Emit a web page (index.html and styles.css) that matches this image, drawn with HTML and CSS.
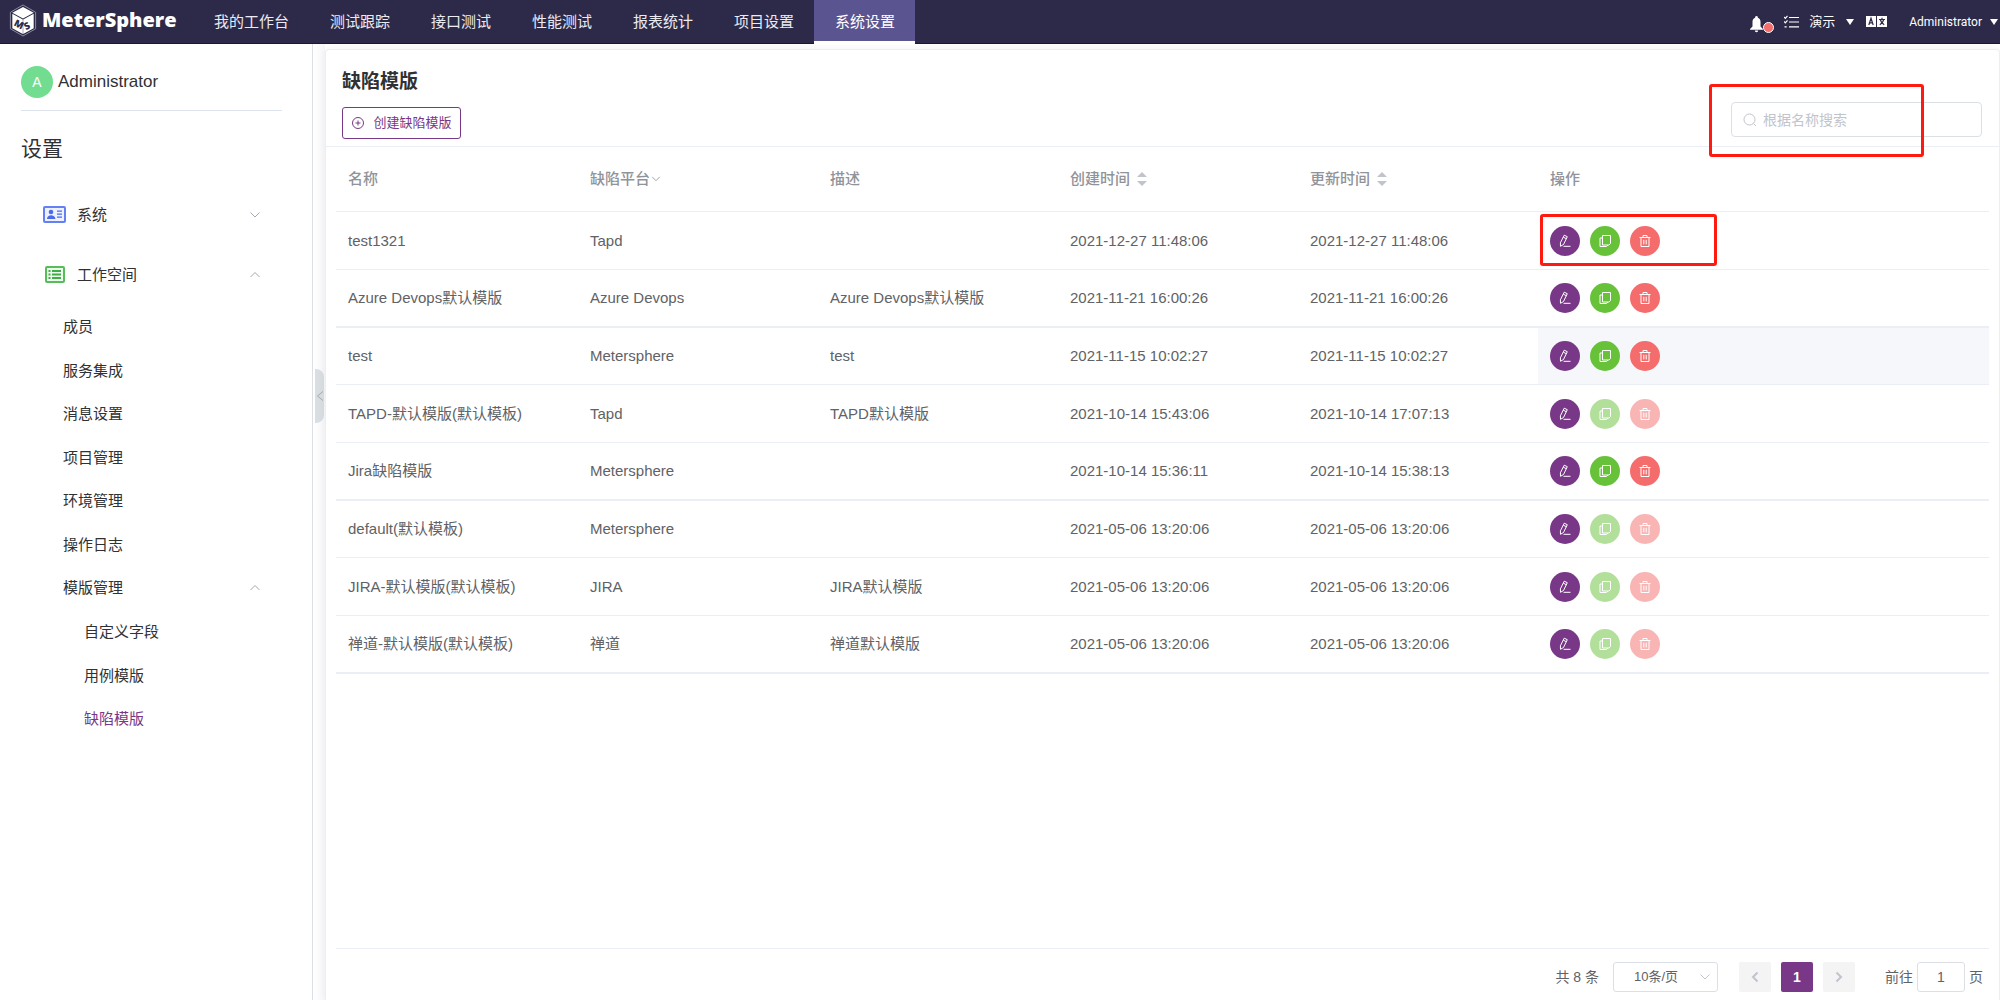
FILE: index.html
```html
<!DOCTYPE html>
<html lang="zh-CN">
<head>
<meta charset="utf-8">
<meta name="viewport" content="width=device-width, initial-scale=1">
<title>MeterSphere</title>
<link rel="stylesheet" href="styles.css">
</head>
<body>
<svg class="sprite" aria-hidden="true">
  <symbol id="edit" viewBox="0 0 14 14"><path d="M6.200 1.200 9.300 2.700 5.500 10.500 2.500 12.300 2.400 8.800ZM5.300 3.200 8.300 4.700M5.500 12.300h7"/></symbol>
  <symbol id="copy" viewBox="0 0 14 14"><path d="M4.500 1.500h8v8l-1.500 1.500h-6.500zM4.500 4H2v8.500h6.500l1.500-1.500"/></symbol>
  <symbol id="trash" viewBox="0 0 14 14"><path d="M1.500 3.500h11M5 3.500v-2h4v2M3 3.500v9h8v-9M5.800 5.800v4.600M8.200 5.800v4.600"/></symbol>
  <symbol id="down" viewBox="0 0 12 12"><path d="M1.500 3.500 6 8l4.500-4.500"/></symbol>
  <symbol id="up" viewBox="0 0 12 12"><path d="M1.500 8 6 3.500 10.500 8"/></symbol>
</svg>

<header class="topbar">
  <a class="brand" href="#">
    <svg class="brand-mark" viewBox="0 0 28 34" aria-hidden="true">
      <path d="M14 1 27 8.500v17L14 33 1 25.500v-17Z" fill="none" stroke="#8e8ba3"/>
      <path d="M14 3 25 9 14 15 3 9ZM3 10 13.800 16v15L3 25ZM25 10 14.200 16v15L25 25Z" fill="#fff"/>
      <text class="mark-letter" x="4" y="22" transform="rotate(27 4 22)">M</text>
      <text class="mark-letter" x="17" y="27" transform="rotate(-27 17 27)">S</text>
    </svg>
    <span class="brand-name">MeterSphere</span>
  </a>
  <nav class="topnav">
    <a href="#">我的工作台</a><a href="#">测试跟踪</a><a href="#">接口测试</a><a href="#">性能测试</a><a href="#">报表统计</a><a href="#">项目设置</a><a href="#" class="active">系统设置</a>
  </nav>
  <div class="tools">
    <button class="bell" aria-label="通知">
      <svg width="13" height="17" viewBox="0 0 13 17"><path d="M6.500 0a1.500 1.500 0 0 1 1.400 1.800C9.700 2.500 10.500 4 10.500 6v4.500L13 13v.8H0V13l2.500-2.500V6c0-2 .8-3.500 2.600-4.200A1.500 1.500 0 0 1 6.500 0ZM4.800 14.600h3.400a1.700 1.700 0 0 1-3.400 0Z" fill="#fff"/></svg>
      <span class="dot"></span>
    </button>
    <button class="tasks" aria-label="任务"><svg width="15" height="14" viewBox="0 0 15 14" fill="none" stroke="#fff" stroke-width="1.200"><path d="M5 2.500h10M5 7h10M5 11.800h10M0 2l1.300 1.300L3.500.8M0 6.500l1.300 1.300L3.500 5.300M.5 11.800h2.200"/></svg></button>
    <button class="space">演示<span class="caret"></span></button>
    <button class="lang" aria-label="语言"><svg width="21" height="11" viewBox="0 0 21 11"><path d="M0 0h10v11H0zM11 0h10v11H11z" fill="#fff"/><path d="M2.800 9 5 2.200 7.200 9M3.500 6.800h3M13 3.500h6M16 1.800v1.700M14.200 3.500c.5 2 2 4 4 5.200M17.800 3.500c-.5 2-2 4-4 5.200" fill="none" stroke="#2c2a48" stroke-width="1.200"/></svg></button>
    <button class="user">Administrator<span class="caret"></span></button>
  </div>
</header>

<div class="layout">
  <aside class="sidebar">
    <div class="profile"><span class="avatar">A</span>Administrator</div>
    <h1 class="side-title">设置</h1>
    <nav>
      <a class="group" href="#"><svg class="group-icon" viewBox="0 0 24 18"><rect x="1" y="1" width="21" height="15" rx="1" fill="#edf0fe" stroke="#6580f1" stroke-width="2"/><circle cx="8" cy="6" r="2.300" fill="#4a69ec"/><path d="M4 13c0-5 8-5 8.500 0ZM14 4.500h5v1.300h-5zM14 7.500h5v1.300h-5zM14 10.500h5v1.300h-5z" fill="#4a69ec"/></svg>系统<svg class="chev"><use href="#down"/></svg></a>
      <a class="group" href="#"><svg class="group-icon" viewBox="0 0 24 18"><rect x="3" y="1" width="18" height="15" rx="1" fill="#eef9ee" stroke="#57bd5b" stroke-width="2"/><path d="M5.500 4h2v2h-2zM9 4h9v2H9zM5.500 7.500h2v2h-2zM9 7.500h9v2H9zM5.500 11h2v2h-2zM9 11h9v2H9z" fill="#3fae44"/></svg>工作空间<svg class="chev"><use href="#up"/></svg></a>
      <ul class="menu">
        <li><a href="#">成员</a></li>
        <li><a href="#">服务集成</a></li>
        <li><a href="#">消息设置</a></li>
        <li><a href="#">项目管理</a></li>
        <li><a href="#">环境管理</a></li>
        <li><a href="#">操作日志</a></li>
        <li><a href="#">模版管理<svg class="chev"><use href="#up"/></svg></a></li>
      </ul>
      <ul class="menu submenu">
        <li><a href="#">自定义字段</a></li>
        <li><a href="#">用例模版</a></li>
        <li><a href="#" class="current">缺陷模版</a></li>
      </ul>
    </nav>
  </aside>
  <div class="gutter"><button class="collapse" aria-label="收起"><svg width="8" height="12" viewBox="0 0 8 12"><path d="M7 1.500 1.500 6 7 10.500"/></svg></button></div>

  <main class="card">
    <div class="card-head">
      <h2>缺陷模版</h2>
      <div class="head-row">
        <button class="create"><svg width="14" height="14" viewBox="0 0 14 14"><circle cx="7" cy="7" r="5.500"/><path d="M4.500 7h5M7 4.500v5"/></svg>创建缺陷模版</button>
        <label class="search">
          <svg width="14" height="14" viewBox="0 0 14 14"><circle cx="6.500" cy="6.500" r="5.500"/><path d="m10.500 10.500 2.500 2.500"/></svg>
          <input type="text" placeholder="根据名称搜索" aria-label="根据名称搜索">
          <span class="mark mark-search"></span>
        </label>
      </div>
    </div>

    <div class="table-wrap">
      <table>
        <colgroup><col class="c-name"><col class="c-col"><col class="c-col"><col class="c-col"><col class="c-col"><col></colgroup>
        <thead><tr><th>名称</th><th>缺陷平台<svg class="filter"><use href="#down"/></svg></th><th>描述</th><th>创建时间<span class="sort"></span></th><th>更新时间<span class="sort"></span></th><th>操作</th></tr></thead>
        <tbody>
          <tr><td>test1321</td><td>Tapd</td><td></td><td>2021-12-27 11:48:06</td><td>2021-12-27 11:48:06</td><td><div class="ops"><button class="op edit" aria-label="编辑"><svg><use href="#edit"/></svg></button><button class="op copy" aria-label="复制"><svg><use href="#copy"/></svg></button><button class="op del" aria-label="删除"><svg><use href="#trash"/></svg></button><span class="mark mark-ops"></span></div></td></tr>
          <tr><td>Azure Devops默认模版</td><td>Azure Devops</td><td>Azure Devops默认模版</td><td>2021-11-21 16:00:26</td><td>2021-11-21 16:00:26</td><td><div class="ops"><button class="op edit" aria-label="编辑"><svg><use href="#edit"/></svg></button><button class="op copy" aria-label="复制"><svg><use href="#copy"/></svg></button><button class="op del" aria-label="删除"><svg><use href="#trash"/></svg></button></div></td></tr>
          <tr><td>test</td><td>Metersphere</td><td>test</td><td>2021-11-15 10:02:27</td><td>2021-11-15 10:02:27</td><td class="hover"><div class="ops"><button class="op edit" aria-label="编辑"><svg><use href="#edit"/></svg></button><button class="op copy" aria-label="复制"><svg><use href="#copy"/></svg></button><button class="op del" aria-label="删除"><svg><use href="#trash"/></svg></button></div></td></tr>
          <tr><td>TAPD-默认模版(默认模板)</td><td>Tapd</td><td>TAPD默认模版</td><td>2021-10-14 15:43:06</td><td>2021-10-14 17:07:13</td><td><div class="ops"><button class="op edit" aria-label="编辑"><svg><use href="#edit"/></svg></button><button class="op copy" aria-label="复制" disabled><svg><use href="#copy"/></svg></button><button class="op del" aria-label="删除" disabled><svg><use href="#trash"/></svg></button></div></td></tr>
          <tr><td>Jira缺陷模版</td><td>Metersphere</td><td></td><td>2021-10-14 15:36:11</td><td>2021-10-14 15:38:13</td><td><div class="ops"><button class="op edit" aria-label="编辑"><svg><use href="#edit"/></svg></button><button class="op copy" aria-label="复制"><svg><use href="#copy"/></svg></button><button class="op del" aria-label="删除"><svg><use href="#trash"/></svg></button></div></td></tr>
          <tr><td>default(默认模板)</td><td>Metersphere</td><td></td><td>2021-05-06 13:20:06</td><td>2021-05-06 13:20:06</td><td><div class="ops"><button class="op edit" aria-label="编辑"><svg><use href="#edit"/></svg></button><button class="op copy" aria-label="复制" disabled><svg><use href="#copy"/></svg></button><button class="op del" aria-label="删除" disabled><svg><use href="#trash"/></svg></button></div></td></tr>
          <tr><td>JIRA-默认模版(默认模板)</td><td>JIRA</td><td>JIRA默认模版</td><td>2021-05-06 13:20:06</td><td>2021-05-06 13:20:06</td><td><div class="ops"><button class="op edit" aria-label="编辑"><svg><use href="#edit"/></svg></button><button class="op copy" aria-label="复制" disabled><svg><use href="#copy"/></svg></button><button class="op del" aria-label="删除" disabled><svg><use href="#trash"/></svg></button></div></td></tr>
          <tr><td>禅道-默认模版(默认模板)</td><td>禅道</td><td>禅道默认模版</td><td>2021-05-06 13:20:06</td><td>2021-05-06 13:20:06</td><td><div class="ops"><button class="op edit" aria-label="编辑"><svg><use href="#edit"/></svg></button><button class="op copy" aria-label="复制" disabled><svg><use href="#copy"/></svg></button><button class="op del" aria-label="删除" disabled><svg><use href="#trash"/></svg></button></div></td></tr>
        </tbody>
      </table>
    </div>

    <div class="pager">
      <span class="total">共 8 条</span>
      <span class="size"><select aria-label="每页条数"><option>10条/页</option></select><svg class="chev"><use href="#down"/></svg></span>
      <div class="pages">
        <button aria-label="上一页" disabled><svg width="8" height="12" viewBox="0 0 8 12"><path d="M6.500 1.500 2 6l4.500 4.500"/></svg></button>
        <button class="on">1</button>
        <button aria-label="下一页" disabled><svg width="8" height="12" viewBox="0 0 8 12"><path d="M1.500 1.500 6 6l-4.500 4.500"/></svg></button>
      </div>
      <label class="jump">前往<input type="text" value="1">页</label>
    </div>
  </main>
</div>
</body>
</html>
```
FILE: styles.css
```css
* { box-sizing: border-box; }
body {
  margin: 0;
  min-height: 100vh;
  display: flex;
  flex-direction: column;
  background: #fff;
  color: #303133;
  font: 15px/20px "Liberation Sans", "Noto Sans CJK SC", sans-serif;
}
a { color: inherit; text-decoration: none; }
button { padding: 0; border: 0; background: none; color: inherit; font: inherit; cursor: pointer; }
input, select { font: inherit; color: inherit; }
ul { margin: 0; padding: 0; list-style: none; }
.sprite { position: absolute; width: 0; height: 0; }

/* top bar */
.topbar {
  display: flex;
  height: 44px;
  background: #2c2a48;
  border-bottom: 1px solid #1c1638;
  color: #fff;
}
.brand { display: flex; align-items: center; width: 193px; padding: 0 0 3px 9px; gap: 5px; }
.brand-mark { width: 28px; height: 33px; flex: none; }
.mark-letter { font: 800 10px "Open Sans", sans-serif; fill: #2c2a48; }
.brand-name { font: 800 20px/30px "Open Sans", sans-serif; }
.topnav { display: flex; }
.topnav a { height: 44px; padding: 12px 20px 10px 21px; color: #eceaf2; }
.topnav .active { background: #5a5490; border-bottom: 3px solid #fff; color: #fff; }
.tools { display: flex; align-items: center; margin-left: auto; padding-right: 2px; font-size: 13px; }
.tools svg { display: block; }
.bell { position: relative; width: 13px; margin: 6px 21px 0 0; }
.dot {
  position: absolute; left: 13px; top: 6px;
  width: 11px; height: 11px;
  border: 1px solid #fff; border-radius: 50%;
  background: #f56c6c;
}
.tasks { margin-right: 10px; }
.space, .user { display: flex; align-items: center; }
.space { gap: 11px; margin-right: 12px; }
.lang { margin-right: 22px; }
.user { gap: 8px; font: 12px/20px Roboto, sans-serif; }
.caret { border: 4px solid transparent; border-top: 6px solid #fff; border-bottom: 0; }

/* sidebar */
.layout { display: flex; flex: 1; }
.sidebar { width: 313px; flex: none; padding: 22px 30px 0 21px; border-right: 1px solid #dcdfe6; }
.profile {
  display: flex; align-items: center; gap: 5px;
  height: 45px; padding-bottom: 12px;
  border-bottom: 1px solid #dce3ec;
  font-size: 17px;
}
.avatar {
  display: grid; place-items: center;
  width: 32px; height: 32px;
  border-radius: 50%;
  background: #72dd90; color: #fff;
  font-size: 14px;
}
.side-title { margin: 23px 0 21px; font-size: 21px; line-height: 30px; font-weight: 400; }
.group, .menu a { display: flex; align-items: center; }
.group { height: 60px; padding: 0 21px 0 22px; gap: 10px; }
.group-icon { width: 24px; height: 18px; }
.chev { width: 12px; height: 12px; margin-left: auto; fill: none; stroke: #a4a8af; }
.menu a { height: 44px; padding: 0 21px 0 42px; }
.menu li:nth-child(even) a { height: 43px; }
.submenu a { padding-left: 63px; }
.menu .current { color: #783887; }
.gutter { width: 12px; flex: none; padding: 325px 0 0 2px; background: linear-gradient(90deg, #fff, #f7f7fa); }
.collapse {
  display: grid; place-items: center;
  width: 9px; height: 54px;
  border-radius: 0 8px 8px 0;
  background: #d9dee2;
}
.collapse svg { fill: none; stroke: #a6abb1; }

/* card */
.card {
  display: flex; flex-direction: column;
  flex: 1; min-width: 0;
  margin-top: 5px;
  border: 1px solid #ebeef5; border-bottom: 0;
  border-radius: 4px 4px 0 0;
  box-shadow: 0 0 8px rgba(0, 0, 0, .06);
  background: #fff;
}
.card-head { padding: 18px 17px 7px 16px; border-bottom: 1px solid #ebeef5; }
h2 { margin: 0 0 6px; font-size: 19px; line-height: 28px; }
.head-row { display: flex; align-items: flex-end; justify-content: space-between; }
.create {
  display: flex; align-items: center; justify-content: center; gap: 8px;
  width: 119px; height: 32px;
  border: 1px solid #783887; border-radius: 3px;
  color: #783887; font-size: 13px;
}
.create svg, .search svg { fill: none; stroke: currentColor; }
.search { position: relative; display: flex; align-items: center; margin-bottom: 2px; color: #c0c4cc; font-size: 14px; }
.search > svg { position: absolute; left: 12px; }
.search input {
  width: 251px; height: 35px;
  padding: 0 12px 0 31px;
  border: 1px solid #dcdfe6; border-radius: 4px;
  background: none; outline: 0;
  color: #606266;
}
.search input::placeholder { color: #c0c4cc; }
.mark { position: absolute; border: 3px solid #ff1a10; border-radius: 3px; pointer-events: none; }
.mark-search { left: -22px; top: -18px; width: 215px; height: 73px; }
.mark-ops { left: -10px; top: -12px; width: 177px; height: 52px; }

/* table */
.table-wrap { flex: 1; padding: 0 10px; }
table { width: 100%; table-layout: fixed; border-spacing: 0; color: #606266; }
.c-name { width: 242px; }
.c-col { width: 240px; }
th, td { padding: 0 12px; text-align: left; border-bottom: 1px solid #ebeef5; }
th { height: 65px; color: #909399; font-weight: 500; }
td { height: 58px; }
tr:nth-child(3n) td { height: 57px; }
tr:nth-child(3n+2) td { border-bottom-width: 2px; }
.hover { background: #f5f7fa; }
.filter { width: 10px; height: 10px; margin-left: 1px; fill: none; stroke: #909399; }
.sort { display: inline-block; width: 10px; height: 14px; margin-left: 7px; vertical-align: -2px; }
.sort::before, .sort::after { content: ""; display: block; border: 5px solid transparent; }
.sort::before { border-top: 0; border-bottom-color: #c0c4cc; margin-bottom: 4px; }
.sort::after { border-bottom: 0; border-top-color: #c0c4cc; }
.ops { position: relative; display: flex; gap: 10px; }
.op { display: grid; place-items: center; width: 30px; height: 30px; border-radius: 50%; }
.op svg { width: 14px; height: 14px; fill: none; stroke: #fff; }
.edit { background: #783887; }
.copy { background: #67c23a; }
.del { background: #f56c6c; }
.op:disabled { opacity: .5; }

/* pagination */
.pager {
  display: flex; align-items: center; justify-content: flex-end;
  margin: 0 10px;
  padding: 13px 6px 8px;
  border-top: 1px solid #ebeef5;
  color: #606266; font-size: 14px;
}
.size { position: relative; margin: 0 21px 0 14px; font-size: 13px; }
.size select {
  appearance: none; display: block;
  width: 105px; height: 30px;
  padding: 0 20px;
  border: 1px solid #dcdfe6; border-radius: 3px;
  background: #fff;
}
.size .chev { position: absolute; right: 7px; top: 9px; stroke: #c0c4cc; }
.pages { display: flex; gap: 10px; margin-right: 30px; }
.pages button { display: grid; place-items: center; width: 32px; height: 30px; border-radius: 2px; background: #f4f4f5; }
.pages svg { fill: none; stroke: #c0c4cc; stroke-width: 2; }
.pages .on { background: #783887; color: #fff; font-weight: 700; }
.jump { display: flex; align-items: center; gap: 4px; }
.jump input { width: 48px; height: 30px; border: 1px solid #dcdfe6; border-radius: 3px; text-align: center; }
```
